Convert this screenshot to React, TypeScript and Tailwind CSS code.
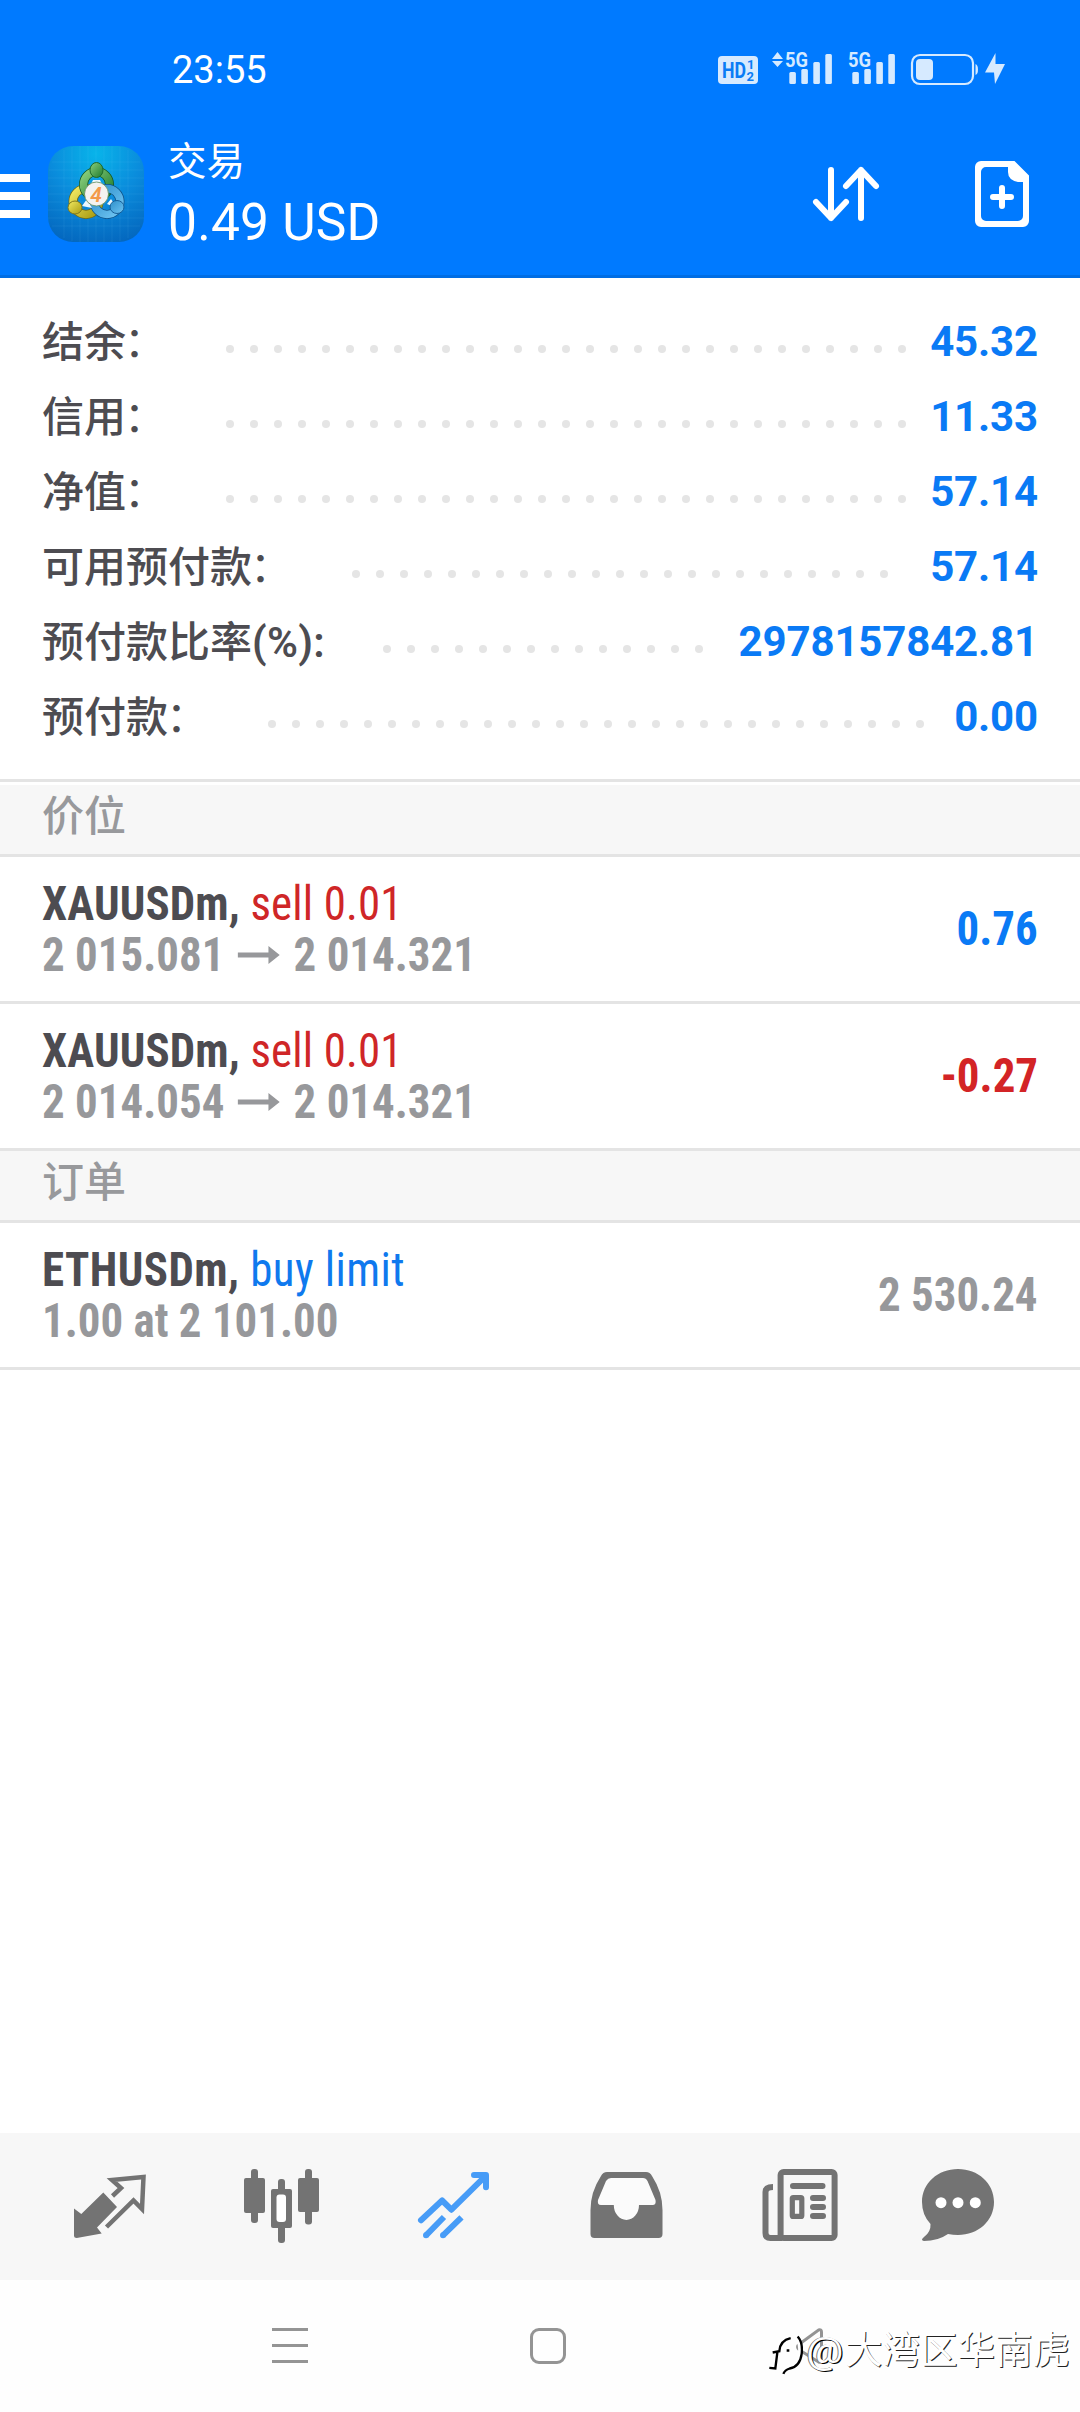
import React from "react";

const CJK = "font-['Roboto','Noto_Sans_CJK_SC',sans-serif]";

function StatusBar() {
  return (
    <div className="flex h-[134px] items-start pl-[172px] text-white">
      <span className="mt-12 text-[38px] leading-[44px]">23:55</span>
      <svg className="mt-[46px] mr-[70px] ml-auto text-[#d6eaff]" width="294" height="44" viewBox="716 46 294 44" fill="currentColor">
        <rect x="718" y="56" width="40" height="28" rx="4" />
        <text x="722" y="78" fontSize="22" fontWeight="700" fill="#0a7cf5" textLength="24" lengthAdjust="spacingAndGlyphs">HD</text>
        <text x="747" y="69" fontSize="13" fontWeight="700" fill="#0a7cf5">1</text>
        <text x="746.500" y="80.500" fontSize="13" fontWeight="700" fill="#0a7cf5">2</text>
        <path d="M777.500 52l5.500 7h-11zM777.500 67l5.500-6h-11z" />
        {[785, 848].map((x) => (
          <g key={x}>
            <text x={x} y="67" fontSize="21" fontWeight="700" textLength="23" lengthAdjust="spacingAndGlyphs">5G</text>
            <rect x={x + 4.3} y="72" width="6.600" height="12" rx="1.500" />
            <rect x={x + 16.3} y="69" width="6.600" height="15" rx="1.500" />
            <rect x={x + 28.3} y="62" width="6.600" height="22" rx="1.500" />
            <rect x={x + 40.3} y="54" width="6.600" height="30" rx="1.500" />
          </g>
        ))}
        <rect x="912" y="55" width="61" height="29" rx="8" fill="none" stroke="currentColor" strokeWidth="2.200" />
        <rect x="916" y="59" width="17" height="21" rx="4" />
        <path d="M975.500 64q2.500 1 2.500 5.500t-2.500 5.500z" />
        <path d="M995.500 53L985 72.500h9L995 84l10-20h-9.500z" />
      </svg>
    </div>
  );
}

function AppIcon() {
  return (
    <svg className="ml-[18px] h-24 w-24" viewBox="0 0 96 96">
      <defs>
        <radialGradient id="bg" cx="0.5" cy="0.08" r="0.95">
          <stop offset="0" stopColor="#08b4ea" />
          <stop offset="0.5" stopColor="#0a8cdc" />
          <stop offset="1" stopColor="#0468bf" />
        </radialGradient>
        <linearGradient id="green" x1="0" y1="0" x2="1" y2="1"><stop offset="0" stopColor="#8ccf7c" /><stop offset="1" stopColor="#1c7a2c" /></linearGradient>
        <linearGradient id="yellow" x1="0" y1="0" x2="1" y2="1"><stop offset="0" stopColor="#f2ea62" /><stop offset="1" stopColor="#a79a10" /></linearGradient>
        <linearGradient id="blue" x1="0" y1="0" x2="1" y2="1"><stop offset="0" stopColor="#2d8fcb" /><stop offset="1" stopColor="#6fc4f2" /></linearGradient>
      </defs>
      <rect width="96" height="96" rx="25" fill="url(#bg)" />
      <path d="M16 4v88M24 1v94M32 0v96M40 0v96M48 0v96M56 0v96M64 0v96M72 1v94M80 4v88M4 16h88M1 24h94M0 32h96M0 40h96M0 48h96M0 56h96M0 64h96M0 72h96M4 80h88" stroke="#7fdcff" strokeOpacity="0.120" strokeWidth="0.800" />
      <g fill="none">
        <circle cx="38" cy="55.500" r="13" stroke="#6f6a12" strokeWidth="9" />
        <circle cx="38" cy="55.500" r="13" stroke="url(#yellow)" strokeWidth="7.500" />
        <circle cx="48.500" cy="38.500" r="13" stroke="#14561f" strokeWidth="9" />
        <circle cx="48.500" cy="38.500" r="13" stroke="url(#green)" strokeWidth="7.500" />
        <circle cx="59" cy="55.500" r="13" stroke="#0d4f85" strokeWidth="9" />
        <circle cx="59" cy="55.500" r="13" stroke="url(#blue)" strokeWidth="7.500" />
      </g>
      <path d="M34 60l5-7 5 9zM59 58l4-5 6 9zM45 34h7l2 4H43z" fill="#eaf6ff" />
      <ellipse cx="48.500" cy="24" rx="6.500" ry="7.500" fill="url(#green)" stroke="#1f6a2b" />
      <ellipse cx="27" cy="61.500" rx="7" ry="6.500" fill="url(#yellow)" stroke="#80781a" />
      <ellipse cx="69" cy="61" rx="7" ry="6.500" fill="url(#blue)" stroke="#175f99" />
      <circle cx="48.500" cy="48" r="12" fill="#f4f2f0" stroke="#5b8a5a" strokeWidth="0.800" />
      <text x="48" y="55.500" textAnchor="middle" fontSize="21" fontWeight="600" fontStyle="italic" fill="#f39a4a">4</text>
    </svg>
  );
}

function Header() {
  return (
    <header className="h-[278px] border-b-[3px] border-[#006de3] bg-[#007aff] text-white">
      <StatusBar />
      <div className="flex h-[141px] items-start">
        <div className="mt-10 flex w-[30px] flex-col gap-2.5">
          <div className="h-2 bg-white" />
          <div className="h-2 bg-white" />
          <div className="h-2 bg-white" />
        </div>
        <div className="mt-3"><AppIcon /></div>
        <div className="ml-6">
          <div className="h-[57px] text-[38.5px] leading-[56px]">交易</div>
          <div className="text-[51.5px] leading-[64px] tracking-[0.2px]">0.49 USD</div>
        </div>
        <svg className="mt-[30px] ml-auto" width="72" height="60" viewBox="810 164 72 60" fill="none" stroke="#fff" strokeWidth="6" strokeLinecap="round" strokeLinejoin="round">
          <path d="M831 170v48M816 202l15 16 15-16M861 218v-48M846 186l15-16 15 16" />
        </svg>
        <svg className="mt-[24px] mr-[48px] ml-[90px]" width="60" height="72" viewBox="972 158 60 72" fill="none">
          <path d="M981 161h33.500L1029 175.500V221a6 6 0 0 1-6 6h-42a6 6 0 0 1-6-6v-54a6 6 0 0 1 6-6zM986 167a5 5 0 0 0-5 5v44a5 5 0 0 0 5 5h32a5 5 0 0 0 5-5v-34h-5q-10-2-10-10v-5z" fill="#fff" fillRule="evenodd" />
          <path d="M1002 188v18M993 197h18" stroke="#fff" strokeWidth="6" strokeLinecap="round" />
        </svg>
      </div>
    </header>
  );
}

const ACCOUNT = [
  { label: "结余", suffix: "：", dots: 29, value: "45.32" },
  { label: "信用", suffix: "：", dots: 29, value: "11.33" },
  { label: "净值", suffix: "：", dots: 29, value: "57.14" },
  { label: "可用预付款", suffix: "：", dots: 23, value: "57.14" },
  { label: "预付款比率", suffix: "(%):", dots: 14, value: "2978157842.81" },
  { label: "预付款", suffix: "：", dots: 28, value: "0.00" },
];

function Account() {
  return (
    <section className="h-[501px] px-[42px] pt-[26px]">
      {ACCOUNT.map((row) => (
        <div key={row.label} className="flex h-[75px] items-center text-[42px]">
          <span className="relative top-px font-medium whitespace-nowrap text-[#4d4c51]">
            {row.label}
            {row.suffix === "：" ? (
              <span className="-ml-[2px] mr-[2px] font-normal">：</span>
            ) : (
              <span className="inline-block w-[73px] font-semibold tracking-[0.3px]">{row.suffix}</span>
            )}
          </span>
          <div className="mt-[15px] ml-[58px] flex gap-4">
            {Array.from({ length: row.dots }, (_, i) => (
              <div key={i} className="size-2 rounded-full bg-[#e5e5e5]" />
            ))}
          </div>
          <span className="ml-auto font-bold tracking-[-0.15px] text-[#0a7af5]">{row.value}</span>
        </div>
      ))}
    </section>
  );
}

function SectionTitle({ children }: { children: React.ReactNode }) {
  return <div className="h-[72px] border-b-[3px] border-[#e4e4e4] bg-[#f7f7f7] pl-[42px] text-[42px] leading-[63px] font-medium text-[#98999c]">{children}</div>;
}

function Arrow() {
  return (
    <svg className="mx-[14px] inline-block" width="46" height="20" viewBox="0 0 44 20" preserveAspectRatio="none" fill="currentColor">
      <path d="M0 7.500h31.500V1L43 10 31.500 19v-6.500H0z" />
    </svg>
  );
}

type TradeProps = { symbol: string; action: string; titleClass: string; actionClass: string; detail: React.ReactNode; value: string; valueClass: string };

function Trade({ symbol, action, titleClass, actionClass, detail, value, valueClass }: TradeProps) {
  return (
    <div className="flex h-[147px] items-center justify-between border-b-[3px] border-[#e4e4e4] px-[42px] text-[48px] font-bold [font-stretch:condensed]">
      <div className="origin-left scale-x-[0.936] leading-[51px]">
        <div className={`text-[#4d4c51] ${titleClass}`}>
          {symbol}, <span className={actionClass}>{action}</span>
        </div>
        <div className="flex items-center text-[#97989b]">{detail}</div>
      </div>
      <div className={`origin-right scale-x-[0.936] ${valueClass}`}>{value}</div>
    </div>
  );
}

function TabBar() {
  return (
    <nav className="flex h-[147px] items-center gap-[88px] bg-[#f7f7f7] pl-[68px] text-[#737373]">
      <svg width="84" height="84" viewBox="68 2165 84 84" fill="none">
        <path d="M74 2208.500l7.300 5.500 22-21.500L117 2207l-20 20.500 4.700 6-25 4.500q-2.700 0-2.700-2z" fill="currentColor" />
        <path d="M112.500 2196l8.500-8-9-8 31.500-3-1.500 32-8.500-8.500-27 26.500" stroke="currentColor" strokeWidth="4.500" />
      </svg>
      <svg width="84" height="84" viewBox="240 2165 84 84" fill="currentColor">
        <rect x="244" y="2178" width="21" height="35" rx="2" /><rect x="251" y="2169" width="7" height="54" rx="3" />
        <rect x="278" y="2179" width="7" height="64" rx="3" /><rect x="271" y="2189" width="21" height="39" rx="2" />
        <rect x="276.500" y="2194.500" width="9.500" height="27.500" rx="3" fill="#fff" />
        <rect x="298" y="2178" width="21" height="34" rx="2" /><rect x="305" y="2169" width="7" height="55.500" rx="3" />
      </svg>
      <svg width="84" height="84" viewBox="412 2165 84 84" fill="none" stroke="#479cf7" strokeWidth="6" strokeLinejoin="round">
        <path d="M421 2220.300l21.100-19.800 9.300 9.200 34.500-34M474 2175h12v12.300" strokeLinecap="round" />
        <path d="M426 2235.300l18-18.300M443 2235.300l18.500-18" />
        <path d="M426 2235.300h0M443 2235.300h0" strokeLinecap="round" />
      </svg>
      <svg width="84" height="84" viewBox="584 2165 84 84">
        <path d="M607 2172h39q4 0 6 4 10.500 16 10.500 34v24q0 4-4 4h-64q-4 0-4-4v-24q0-18 10.500-34 2-4 6-4z" fill="currentColor" />
        <path d="M611 2178h32q3 0 4.500 3l8 19q1 5-3 5H639a12.600 15 0 0 1-25.200 0H601q-4 0-3-5l8-19q2-3 5-3z" fill="#fbfbfb" />
      </svg>
      <svg width="84" height="84" viewBox="756 2165 84 84" fill="none" stroke="currentColor" strokeWidth="6">
        <rect x="780.600" y="2172" width="54" height="66" rx="3" />
        <path d="M773 2187q-7.500 0-7.500 5v41q0 5 5 5h12" />
        <path d="M793 2186h29.500M813 2198h10M813 2207h10M813 2216h10" strokeLinecap="round" />
        <rect x="792.300" y="2197.600" width="9.500" height="18.800" rx="1" strokeWidth="5.200" />
      </svg>
      <svg className="-ml-3" width="84" height="84" viewBox="916 2165 84 84">
        <path d="M958 2169c20 0 36 14 36 33s-16 33-36 33q-5 0-10-1-10 7-24 7-4-1 0-4 7-5 6.500-13-8.500-9-8.500-22c0-19 16-33 36-33z" fill="currentColor" />
        <circle cx="941" cy="2202.700" r="5.500" fill="#fff" /><circle cx="958" cy="2202.700" r="5.500" fill="#fff" /><circle cx="975.300" cy="2202.700" r="5.500" fill="#fff" />
      </svg>
    </nav>
  );
}

function SystemNav() {
  return (
    <footer className="relative flex h-[132px] items-start bg-[#fefefe] pt-12">
      <div className="ml-[272px] flex w-9 flex-col gap-[13px]">
        <div className="h-[3px] bg-[#949494]" />
        <div className="h-[3px] bg-[#949494]" />
        <div className="h-[3px] bg-[#949494]" />
      </div>
      <div className="ml-[222px] size-9 rounded-[9px] border-[3px] border-[#949494]" />
      <svg className="ml-[230px]" width="30" height="36" viewBox="796 2328 30 36" fill="none" stroke="#949494" strokeWidth="3">
        <path d="M821.500 2332v28q0 3-3 2l-19-12q-4-3 0-6l19-14q3-1 3 2z" />
      </svg>
      <div className="absolute top-[42px] left-[768px] flex items-center text-[37.5px] leading-[56px] whitespace-nowrap text-white [text-shadow:1px_1px_0_#222]">
        <svg className="mt-[9px]" width="35" height="42" viewBox="24 75 105 125" fill="none" stroke="#fff" strokeWidth="14">
          <path d="M34 174l10-2 7-44M38 124h18q0-36 34-41M104 80q20 14 17 48-4 42-38 48-14 4-16 15" />
          <path d="M28 176l18 2 6-48M38 130l20-4q2-32 34-39M113 82q16 18 12 52-5 38-36 44-14 4-19 16M80 124h8" stroke="#000" strokeWidth="7" />
        </svg>
        <span className="inline-block w-[42px] origin-left scale-x-[1.1] pl-[3px] [text-shadow:1px_1px_0_#000,-1px_0_0_#777]">@</span>
        <span>大湾区华南虎</span>
      </div>
    </footer>
  );
}

export default function App() {
  return (
    <div className={`flex h-[2412px] w-[1080px] flex-col overflow-hidden bg-white ${CJK}`}>
      <Header />
      <Account />
      <main className="flex-1 border-t-[3px] border-[#e4e4e4]">
        <div className="h-[3px]" />
        <SectionTitle>价位</SectionTitle>
        <Trade symbol="XAUUSDm" action="sell 0.01" titleClass="tracking-[0.15px]" actionClass="font-normal text-[#cf2627]" detail={<>2 015.081<Arrow />2 014.321</>} value="0.76" valueClass="text-[#0a7af5]" />
        <Trade symbol="XAUUSDm" action="sell 0.01" titleClass="tracking-[0.15px]" actionClass="font-normal text-[#cf2627]" detail={<>2 014.054<Arrow />2 014.321</>} value="-0.27" valueClass="text-[#d32426]" />
        <SectionTitle>订单</SectionTitle>
        <Trade symbol="ETHUSDm" action="buy limit" titleClass="tracking-[0.45px]" actionClass="font-normal text-[#0f79ee]" detail="1.00 at 2 101.00" value="2 530.24" valueClass="text-[#97989b]" />
      </main>
      <TabBar />
      <SystemNav />
    </div>
  );
}
